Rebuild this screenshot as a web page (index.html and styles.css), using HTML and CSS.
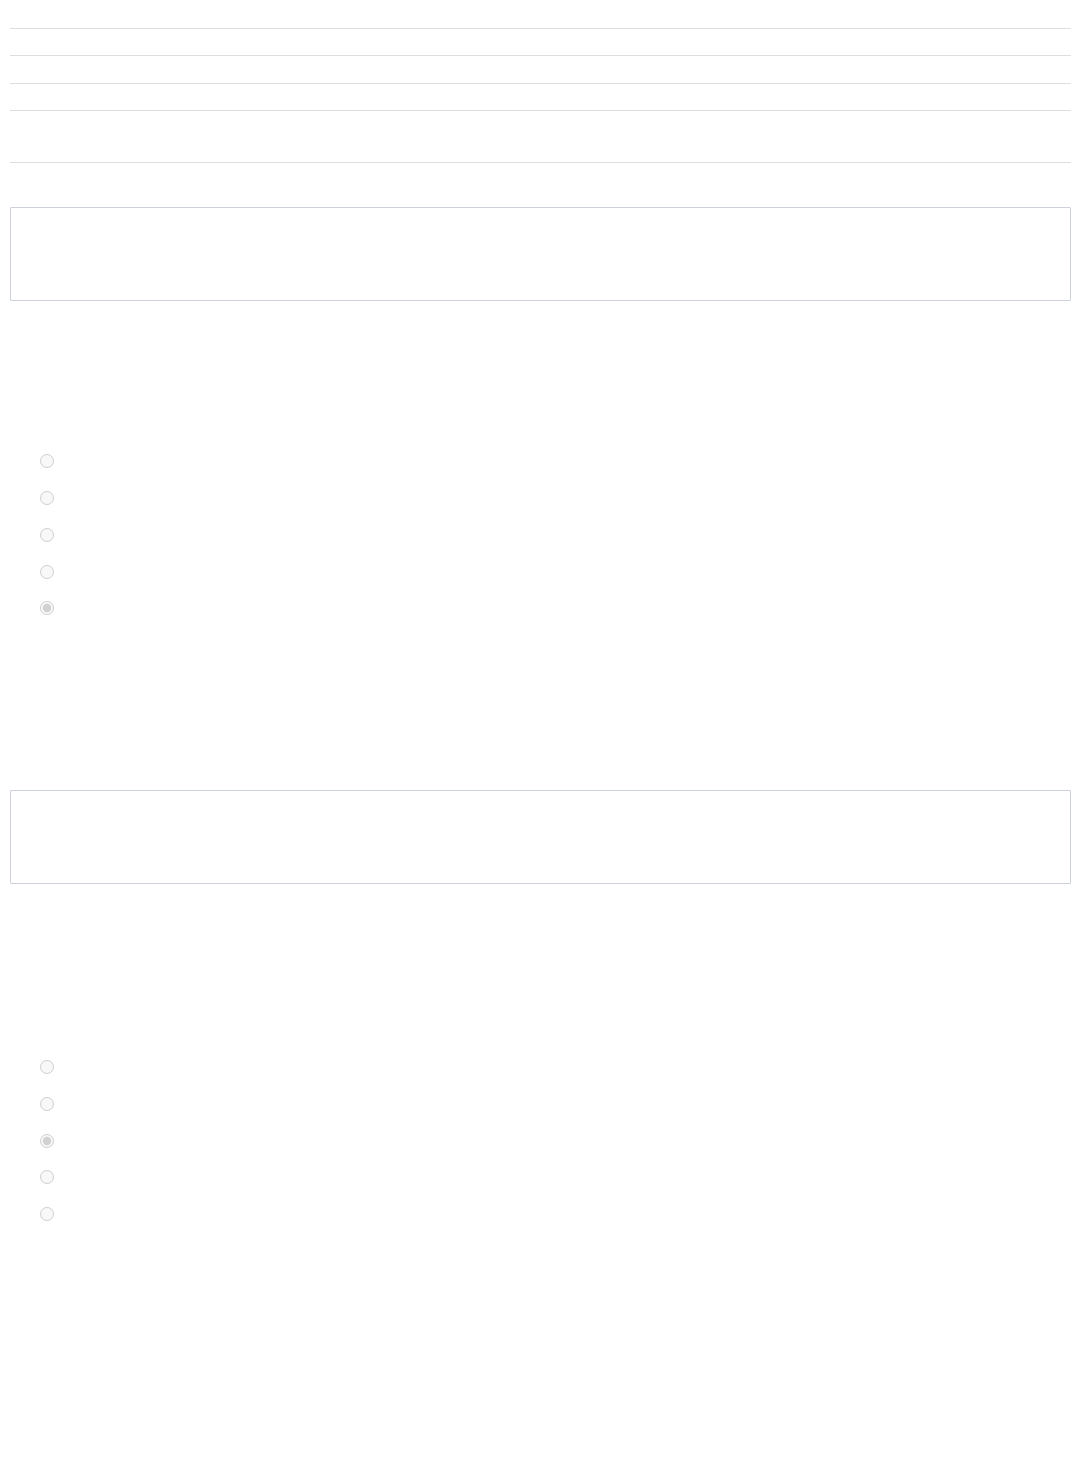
FILE: index.html
```html
<!DOCTYPE html>
<html>
<head>
    <title>Survey</title>
    <link rel="stylesheet" href="styles.css">
</head>
<body>
    <div class="page">
        <div class="info">
            <div class="info-row r1"></div>
            <div class="info-row r2"></div>
            <div class="info-row r3"></div>
            <div class="info-row r4"></div>
        </div>

        <div class="question first">
            <textarea class="answer" disabled></textarea>
            <div class="options">
                <label class="option"><input type="radio" name="q1" disabled></label>
                <label class="option"><input type="radio" name="q1" disabled></label>
                <label class="option"><input type="radio" name="q1" disabled></label>
                <label class="option"><input type="radio" name="q1" disabled></label>
                <label class="option"><input type="radio" name="q1" checked disabled></label>
            </div>
        </div>

        <div class="question second">
            <textarea class="answer" disabled></textarea>
            <div class="options">
                <label class="option"><input type="radio" name="q2" disabled></label>
                <label class="option"><input type="radio" name="q2" disabled></label>
                <label class="option"><input type="radio" name="q2" checked disabled></label>
                <label class="option"><input type="radio" name="q2" disabled></label>
                <label class="option"><input type="radio" name="q2" disabled></label>
            </div>
        </div>
    </div>
</body>
</html>
```

FILE: styles.css
```css
body { margin: 0; background: #fff; font-family: "Liberation Sans", Arial, sans-serif; color: #333; }
.page { margin: 0 8px 0 10px; padding-top: 28px; }

.info { border-bottom: 1px solid #dedee2; }
.info-row { border-top: 1px solid #dedee2; }
.r1 { height: 26px; }
.r2 { height: 27px; }
.r3 { height: 26px; }
.r4 { height: 51px; }

.answer { display: block; box-sizing: border-box; width: 1061px; height: 94px; margin: 0; padding: 6px;
          border: 1px solid #cdd1da; border-radius: 1px; background: #fff; resize: none; }
.first .answer { margin-top: 44px; }
.second .answer { margin-top: 163px; }

.options { display: flex; flex-direction: column; padding-left: 28px; }
.first .options { margin-top: 142px; }
.second .options { margin-top: 165px; }
.option { display: flex; align-items: center; height: 36.75px; }
.option input { margin: 0 0 0 2px; width: 14px; height: 14px; }
```
